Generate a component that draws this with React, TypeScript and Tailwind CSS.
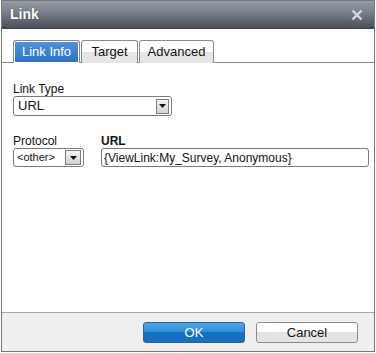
import { ReactNode } from 'react'

function DropArrow({ className = '' }: { className?: string }) {
  return (
    <span
      className={`flex items-center justify-center border border-[#7c7c7c] bg-gradient-to-b from-[#f4f4f4] to-[#d3d3d3] ${className}`}
    >
      <svg width="7" height="4" viewBox="0 0 7 4">
        <path d="M0 0H7L3.5 4Z" fill="#111" />
      </svg>
    </span>
  )
}

function Tab({ label, active, className = '' }: { label: string; active?: boolean; className?: string }) {
  return (
    <div
      className={`-mb-px flex h-[23px] items-center justify-center rounded-t-[3px] border border-b-0 text-[13px] ${
        active
          ? 'border-[#8a8a8a] bg-gradient-to-b from-[#4f95de] to-[#2c6fc3] text-white shadow-[inset_0_0_0_1px_#fff]'
          : 'border-[#8a8a8a] bg-gradient-to-b from-white via-white via-50% to-[#e6e6e6] to-50% text-[#111]'
      } ${className}`}
    >
      {label}
    </div>
  )
}

function Field({ label, bold, children }: { label: string; bold?: boolean; children: ReactNode }) {
  return (
    <div className="flex flex-col">
      <span className={`h-[14px] text-[12px] leading-[14px] text-[#111] ${bold ? 'font-bold' : ''}`}>{label}</span>
      {children}
    </div>
  )
}

export default function App() {
  return (
    <div className="h-[353px] w-[376px] bg-white font-['Liberation_Sans',Arial,sans-serif]">
      <div className="ml-px flex h-[352px] w-[374px] flex-col border border-[#777]">
        <div className="flex h-[28px] items-center justify-between border-b border-[#3d4149] bg-gradient-to-b from-[#979da7] via-[#737a85] to-[#4a4f58] pl-[8px] pr-[11px]">
          <span className="text-[14px] font-bold text-white [text-shadow:0_0_1px_#333]">Link</span>
          <svg width="12" height="12" viewBox="0 0 12 12">
            <path d="M1.5 1.5L10.5 10.5M10.5 1.5L1.5 10.5" stroke="#d5d9de" strokeWidth="2.4" />
          </svg>
        </div>

        <div className="flex-1 bg-white pt-[11px]">
          <div className="flex gap-[1px] border-b border-[#8a8a8a] pl-[11px]">
            <Tab label="Link Info" active className="w-[67px]" />
            <Tab label="Target" className="w-[57px]" />
            <Tab label="Advanced" className="w-[75px]" />
          </div>

          <div className="pl-[11px] pr-[5px] pt-[19px]">
            <Field label="Link Type">
              <div className="flex h-[20px] w-[159px] items-center justify-between rounded-[3px] border border-[#7a7a7a] bg-white pl-[4px] pr-[2px] text-[13px] text-[#111]">
                <span>URL</span>
                <DropArrow className="h-[15px] w-[13px]" />
              </div>
            </Field>

            <div className="mt-[18px] flex gap-[17px]">
              <Field label="Protocol">
                <div className="flex h-[19px] w-[71px] items-center justify-between rounded-[3px] border border-[#7a7a7a] bg-white pl-[3px] pr-[2px] text-[11px] text-[#111]">
                  <span>&lt;other&gt;</span>
                  <DropArrow className="h-[15px] w-[16px]" />
                </div>
              </Field>
              <div className="flex-1">
                <Field label="URL" bold>
                  <div className="flex h-[19px] items-center rounded-[3px] border border-[#7a7a7a] bg-white pl-[2px] text-[12px] text-[#111]">
                    {'{ViewLink:My_Survey, Anonymous}'}
                  </div>
                </Field>
              </div>
            </div>
          </div>
        </div>

        <div className="flex h-[39px] items-center justify-end gap-[11px] border-t border-[#a3a7ae] bg-[#eeeeee] pr-[16px]">
          <button className="h-[21px] w-[102px] rounded-[3px] border border-[#30608f] bg-gradient-to-b from-[#4aa8ec] via-[#2f8ad8] via-50% to-[#1570c0] to-50% text-[13px] text-white">
            OK
          </button>
          <button className="h-[21px] w-[102px] rounded-[3px] border border-[#8c8c8c] bg-gradient-to-b from-white via-white via-50% to-[#e4e4e4] to-50% text-[13px] text-[#111]">
            Cancel
          </button>
        </div>
      </div>
    </div>
  )
}
